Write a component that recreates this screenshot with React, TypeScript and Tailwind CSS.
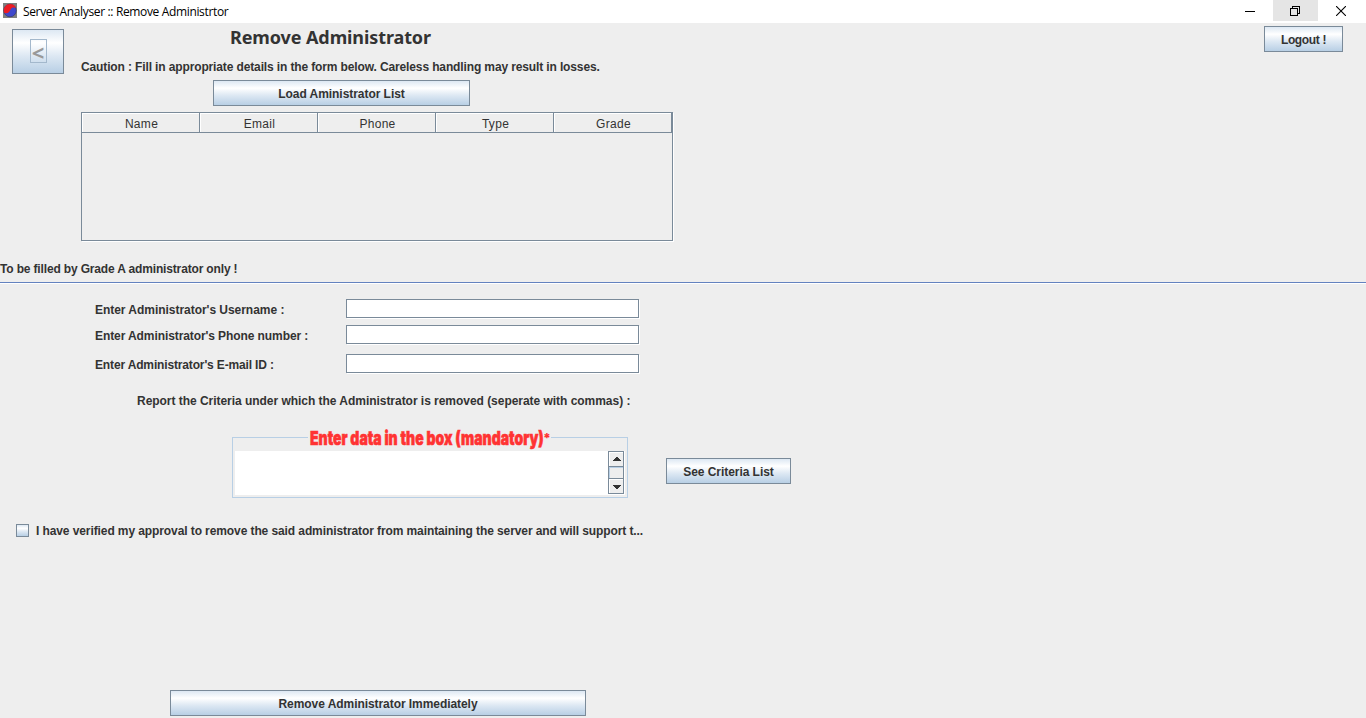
import type { ReactNode } from 'react';

const metal =
  'border border-[#7a8a99] bg-[linear-gradient(to_bottom,#dde8f3_0%,#ffffff_30%,#dde8f3_60%,#b8cfe5_100%)]';

function MetalButton({ className, children }: { className: string; children: ReactNode }) {
  return (
    <button type="button" className={`flex h-[26px] shrink-0 items-center justify-center whitespace-nowrap pt-px font-bold ${metal} ${className}`}>
      {children}
    </button>
  );
}

function Field({ label, spacing, className }: { label: string; spacing: string; className: string }) {
  return (
    <label className={`flex h-5 items-start ${className}`}>
      <span className={`w-[251px] whitespace-nowrap pt-[3px] font-bold ${spacing}`}>{label}</span>
      <input className="h-[19px] w-[293px] border border-[#7a8a99] bg-white shadow-[1px_1px_0_#fff] outline-none" />
    </label>
  );
}

function Arrow({ down }: { down?: boolean }) {
  return (
    <svg width="8" height="4" viewBox="0 0 8 4" shapeRendering="crispEdges" className={`ml-px ${down ? 'mt-0.5 rotate-180' : ''}`}>
      <path d="M3 0h2v1h1v1h1v1h1v1H0V3h1V2h1V1h1z" fill="#333" />
    </svg>
  );
}

const columns = ['Name', 'Email', 'Phone', 'Type', 'Grade'];

export default function App() {
  return (
    <div className="flex h-[718px] w-[1366px] flex-col overflow-hidden bg-[#eeeeee] font-['Liberation_Sans',sans-serif] text-[12px] leading-4 text-[#333333]">
      <header className="flex h-[23px] shrink-0 bg-white text-black">
        <svg width="14" height="15" viewBox="0 0 14 15" className="mt-[3px] ml-[3px]">
          <path fill="#7f7f7f" d="M0 0h14v15H0z" />
          <circle cx="7" cy="7.5" r="6.3" fill="#3f48cc" stroke="#2b2b50" strokeWidth=".5" />
          <path d="M1 9.5C-.2 5 3 1 7 1c3 0 5 1.400 6 4-2-1-4-.8-5 .8C6.800 8 6 10 3.500 10.300 2.500 10.400 1.600 10.100 1 9.500z" fill="#ed1c24" />
        </svg>
        <h1 className="ml-1.5 mt-1 whitespace-nowrap font-['Open_Sans',sans-serif] text-[12px] tracking-[-0.35px]">Server Analyser :: Remove Administrtor</h1>
        <div className="ml-auto flex h-[21px]">
          <div className="flex w-[46px] items-center justify-center">
            <svg width="10" height="10" shapeRendering="crispEdges"><path d="M0 5h10v1H0z" /></svg>
          </div>
          <div className="flex w-[45px] items-center justify-center bg-[#e5e5e5] pr-px">
            <svg width="10" height="10" fill="none" stroke="#000" shapeRendering="crispEdges"><path d="M.5 2.5h7v7h-7zM2.5 2V.5h7v7H8" /></svg>
          </div>
          <div className="flex w-[46px] items-center justify-center">
            <svg width="10" height="10" stroke="#000" strokeWidth="1.1"><path d="M0 0l10 10M10 0L0 10" /></svg>
          </div>
          <div className="w-0.5" />
        </div>
      </header>

      <section className="flex h-[237px] shrink-0 items-start">
        <button type="button" className={`mt-1.5 ml-3 flex h-[45px] w-[52px] items-center justify-center pb-px ${metal}`}>
          <span className="flex h-6 w-[17px] items-center justify-center border border-[#a3b8cc] pt-px font-['Noto_Sans',sans-serif] text-[22px] font-bold text-[#999999]">&lt;</span>
        </button>
        <div className="ml-[17px] flex flex-col items-start">
          <h2 className="mt-0.5 ml-[149px] h-6 whitespace-nowrap font-['Noto_Sans',sans-serif] text-[18px] leading-6 font-bold tracking-[-0.1px]">Remove Administrator</h2>
          <p className="mt-2.5 h-4 whitespace-nowrap font-bold tracking-[-0.128px]">Caution : Fill in appropriate details in the form below. Careless handling may result in losses.</p>
          <MetalButton className="mt-[5px] ml-[132px] w-[257px] tracking-[-0.05px]">Load Aministrator List</MetalButton>
          <div className="mt-1.5 h-[129px] w-[592px] border border-[#7a8a99] shadow-[1px_1px_0_#fff]">
            <div className="flex">
              {columns.map((c) => (
                <div key={c} className="h-5 w-[118px] border-r border-b border-r-[#7a8a99] border-b-[#7a8a99] pt-[3px] pl-0.5 text-center text-[12px] tracking-[0.3px] shadow-[inset_1px_1px_0_#fff]">
                  {c}
                </div>
              ))}
            </div>
          </div>
        </div>
        <MetalButton className="mt-[3px] mr-[23px] ml-auto w-[79px] tracking-[-0.35px]">Logout !</MetalButton>
      </section>

      <p className="h-[22px] shrink-0 pt-px font-bold tracking-[-0.155px]">To be filled by Grade A administrator only !</p>
      <hr className="h-0.5 shrink-0 border-t border-b border-t-[#6382bf] border-b-white" />

      <form className="flex flex-col items-start">
        <Field label="Enter Administrator's Username :" spacing="tracking-[-0.035px]" className="mt-[15px] ml-[95px]" />
        <Field label="Enter Administrator's Phone number :" spacing="tracking-[-0.09px]" className="mt-1.5 ml-[95px]" />
        <Field label="Enter Administrator's E-mail ID :" spacing="tracking-[-0.15px]" className="mt-[9px] ml-[95px]" />
        <p className="mt-[19px] ml-[137px] whitespace-nowrap font-bold tracking-[-0.035px]">Report the Criteria under which the Administrator is removed (seperate with commas) :</p>

        <div className="mt-[19px] ml-[232px] flex">
          <fieldset className="h-[70px] w-[396px] border border-[#b8cfe5] pl-0.5">
            <legend className="ml-[73px] flex h-[18px] w-[243px] pt-0.5 pl-0.5 whitespace-nowrap font-['Inter',sans-serif] leading-[18px] font-black text-[#ff3333]">
              <span className="w-[233px] shrink-0">
                <span className="inline-block origin-left scale-x-[0.735] text-[19px] [-webkit-text-stroke:0.6px_#ff3333]">Enter data in the box (mandatory)</span>
              </span>
              <span className="text-[13px] leading-4">*</span>
            </legend>
            <div className="mt-[5px] flex h-11 w-[390px] bg-white">
              <textarea className="h-11 w-[373px] resize-none bg-white outline-none" />
              <div className="flex h-[43px] w-4 flex-col border border-[#7a8a99] bg-[#eeeeee] shadow-[1px_1px_0_#fff]">
                <div className="flex h-[15px] items-center justify-center border-b border-[#7a8a99] shadow-[inset_1px_1px_0_#fff]"><Arrow /></div>
                <div className="h-[11px] border-t border-l border-[#b8cfe5]" />
                <div className="flex h-[15px] items-center justify-center border-t border-[#7a8a99] shadow-[inset_1px_1px_0_#fff]"><Arrow down /></div>
              </div>
            </div>
          </fieldset>
          <MetalButton className="mt-[30px] ml-[38px] w-[125px] tracking-[-0.05px]">See Criteria List</MetalButton>
        </div>

        <label className="mt-[25px] ml-4 flex h-4 items-center">
          <span className={`mb-0.5 h-[13px] w-[13px] ${metal}`} />
          <span className="ml-[7px] whitespace-nowrap font-bold tracking-[-0.095px]">I have verified my approval to remove the said administrator from maintaining the server and will support t...</span>
        </label>
      </form>

      <MetalButton className="mt-auto mb-0.5 ml-[170px] w-[416px] tracking-[-0.06px]">Remove Administrator Immediately</MetalButton>
    </div>
  );
}
